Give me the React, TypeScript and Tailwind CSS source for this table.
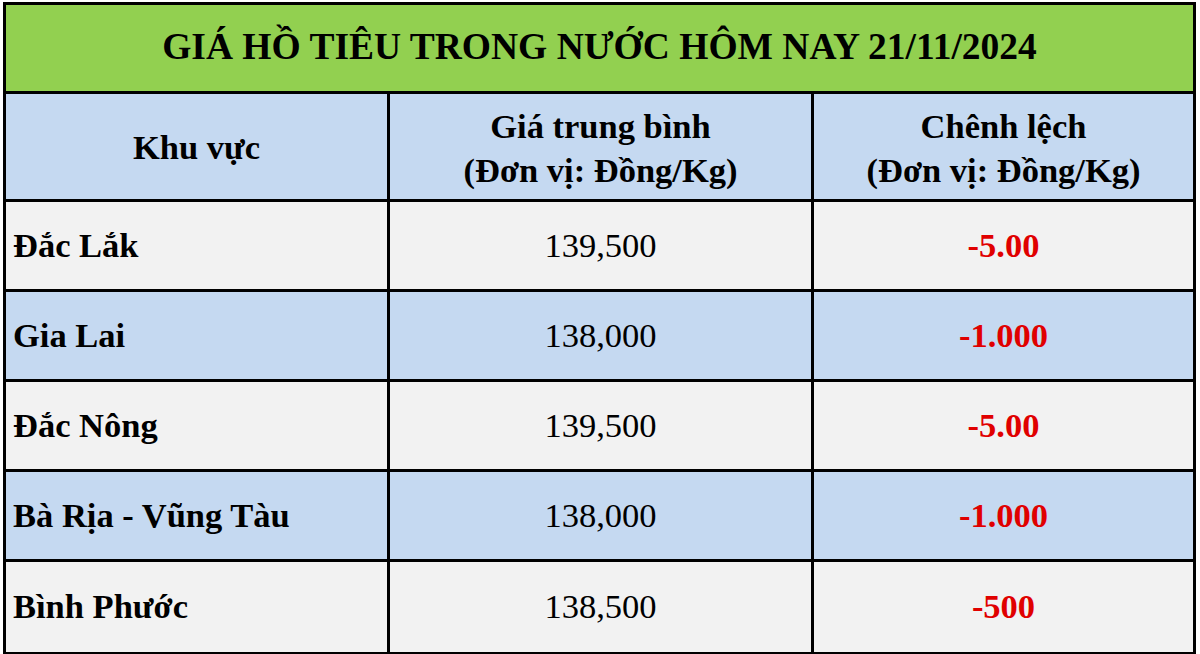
const rows = [
  { area: 'Đắc Lắk', price: '139,500', diff: '-5.00' },
  { area: 'Gia Lai', price: '138,000', diff: '-1.000' },
  { area: 'Đắc Nông', price: '139,500', diff: '-5.00' },
  { area: 'Bà Rịa - Vũng Tàu', price: '138,000', diff: '-1.000' },
  { area: 'Bình Phước', price: '138,500', diff: '-500' },
];

const App = () => {
  return (
    <div className="h-[654px] w-[1200px] bg-white pt-[2px] pl-[3px] font-['Liberation_Serif','Times_New_Roman',serif] text-black">
      <div className="w-[1193px] border-[3px] border-black">
        <div className="flex h-[89px] items-center justify-center border-b-[3px] border-black bg-[#92d050] pb-[2px] text-[37.5px] font-bold">
          GIÁ HỒ TIÊU TRONG NƯỚC HÔM NAY 21/11/2024
        </div>
        <div className="grid h-[108px] grid-cols-[381px_3px_421px_3px_1fr] border-b-[3px] border-black bg-[#c5d9f1] text-[34.5px] leading-[44px] font-bold">
          <div className="flex items-center justify-center">Khu vực</div>
          <div className="bg-black" />
          <div className="flex flex-col items-center justify-center pt-[2px]">
            <span>Giá trung bình</span>
            <span>(Đơn vị: Đồng/Kg)</span>
          </div>
          <div className="bg-black" />
          <div className="flex flex-col items-center justify-center pt-[2px]">
            <span>Chênh lệch</span>
            <span>(Đơn vị: Đồng/Kg)</span>
          </div>
        </div>
        {rows.map((r, i) => (
          <div
            key={r.area}
            className={
              'grid h-[90px] grid-cols-[381px_3px_421px_3px_1fr] text-[34.5px] ' +
              (i % 2 === 1 ? 'bg-[#c5d9f1] ' : 'bg-[#f2f2f2] ') +
              (i < rows.length - 1 ? 'border-b-[3px] border-black' : 'h-[87px]')
            }
          >
            <div className="flex items-center pl-[7px] font-bold">{r.area}</div>
            <div className="bg-black" />
            <div className="flex items-center justify-center">{r.price}</div>
            <div className="bg-black" />
            <div className="flex items-center justify-center font-bold text-[#e00000]">{r.diff}</div>
          </div>
        ))}
      </div>
    </div>
  );
};

export default App;
